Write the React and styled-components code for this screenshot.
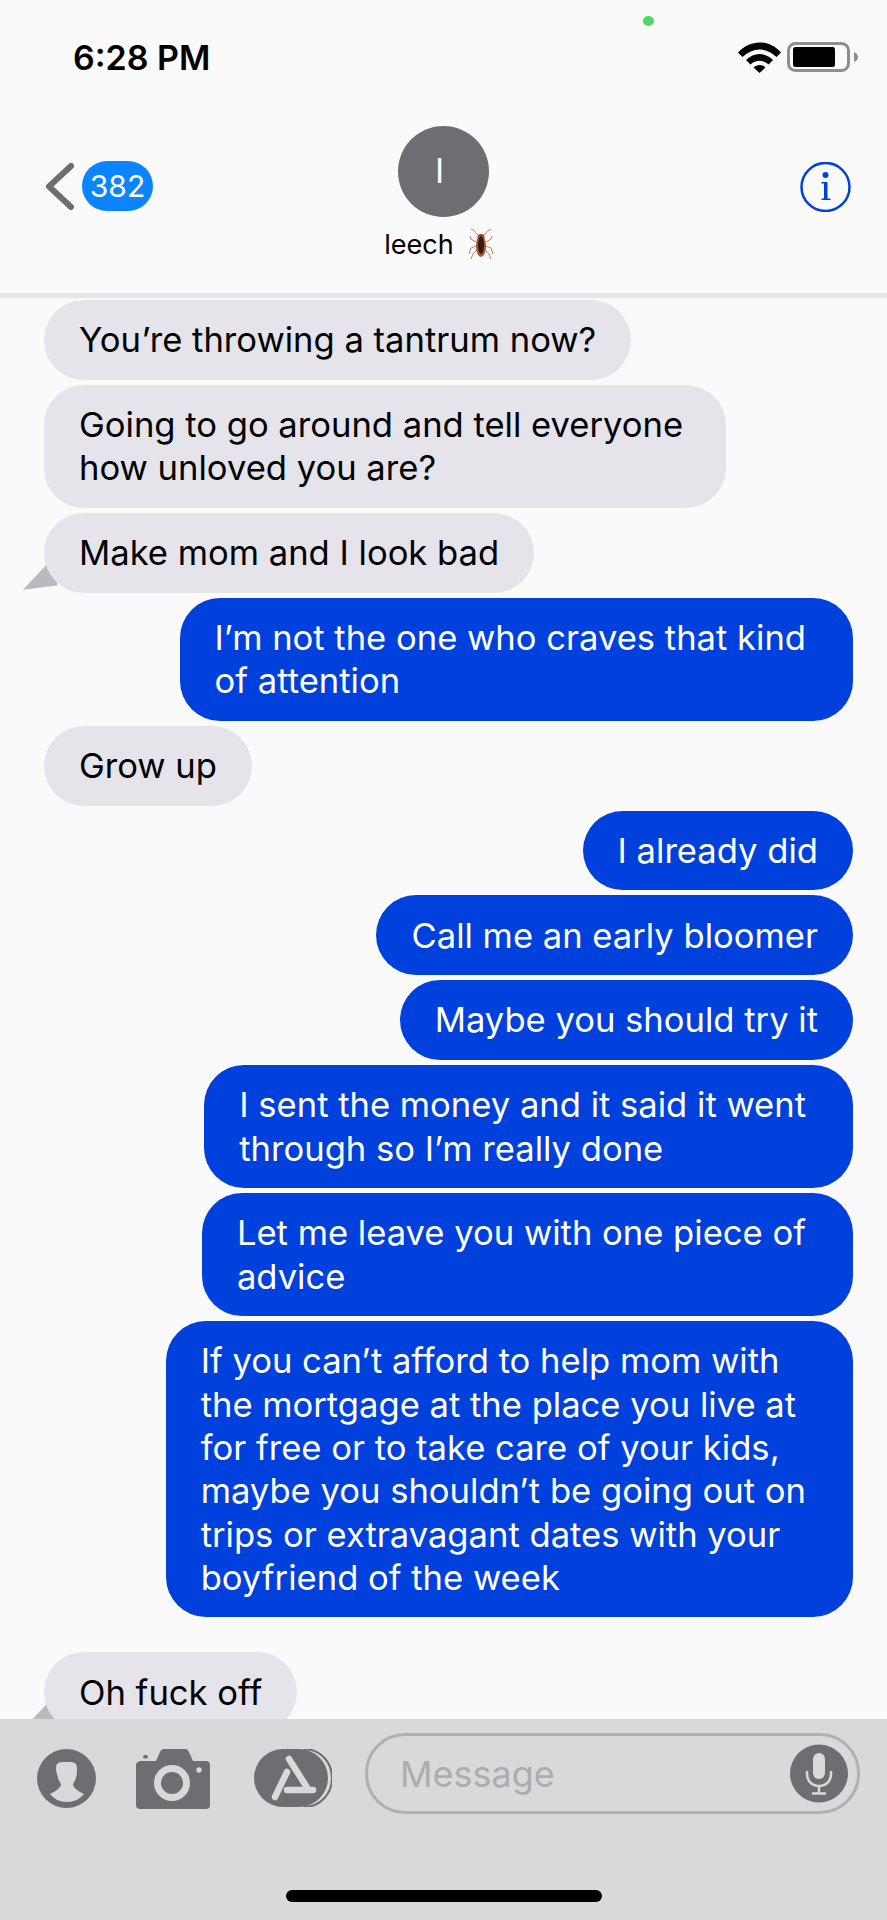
import React from 'react'
import styled, { createGlobalStyle } from 'styled-components'

const Global = createGlobalStyle`
    html, body {
        margin: 0;
        padding: 0;
        background: #fafafa;
    }
`

const Phone = styled.div`
    width: 887px;
    height: 1920px;
    display: flex;
    flex-direction: column;
    overflow: hidden;
    position: relative;
    background: #fafafa;
    font-family: Inter, "Liberation Sans", sans-serif;
`

const Header = styled.header`
    flex: none;
    height: 298px;
    box-sizing: border-box;
    border-bottom: 5px solid #e5e5ea;
    padding-top: 37px;
`

const GreenDot = styled.div`
    position: absolute;
    top: 16px;
    left: 643px;
    width: 11px;
    height: 10px;
    border-radius: 50%;
    background: #4cd964;
`

const StatusBar = styled.div`
    display: flex;
    justify-content: space-between;
    align-items: center;
    height: 40px;
    padding: 0 29px 0 73px;
`

const Clock = styled.span`
    font-size: 34px;
    font-weight: 600;
    color: #000;
`

const StatusIcons = styled.div`
    display: flex;
    align-items: center;
    gap: 6px;
`

const NavBar = styled.div`
    display: grid;
    grid-template-columns: 1fr auto 1fr;
    padding: 49px 36px 0 36px;
`

const BackLink = styled.div`
    display: flex;
    align-items: center;
    gap: 8px;
    height: 50px;
    margin: 35px 0 0 9px;
`

const Badge = styled.span`
    width: 71px;
    height: 50px;
    border-radius: 25px;
    background: #0a84ff;
    color: #fff;
    font-size: 30px;
    line-height: 50px;
    text-align: center;
`

const Contact = styled.div`
    display: flex;
    flex-direction: column;
    align-items: center;
`

const Avatar = styled.div`
    width: 91px;
    height: 91px;
    border-radius: 50%;
    background: #6e6d72;
    color: #fff;
    font-size: 34px;
    line-height: 89px;
    text-align: center;
    text-indent: -8px;
`

const ContactName = styled.div`
    display: flex;
    align-items: center;
    gap: 13px;
    margin: 10px 0 0 -8px;
    height: 34px;
    font-size: 27px;
    color: #000;
`

const InfoWrap = styled.div`
    justify-self: end;
    margin-top: 36px;
`

const Thread = styled.main`
    flex: 1;
    min-height: 0;
    overflow: hidden;
    isolation: isolate;
    display: flex;
    flex-direction: column;
    gap: 5px;
    padding: 2px 34px 0 44px;
`

const Bubble = styled.div`
    position: relative;
    align-self: ${(p) => (p.$mine ? 'flex-end' : 'flex-start')};
    margin-top: ${(p) => (p.$spaced ? '30px' : '0')};
    padding: 18.25px ${(p) => (p.$wrapped ? (p.$mine ? '47px' : '43px') : '35px')} 18.25px 35px;
    border-radius: 40px;
    background: ${(p) => (p.$mine ? '#0040dd' : '#e5e4eb')};
    color: ${(p) => (p.$mine ? '#fff' : '#000')};
    font-size: 34.6px;
    line-height: 43.3px;
    white-space: nowrap;

    ${(p) => p.$tail && `
        &::before {
            content: '';
            position: absolute;
            left: -21px;
            bottom: 3px;
            width: 34px;
            height: 26px;
            background: #b9b9be;
            clip-path: polygon(100% 0, 72% 0, 0 100%, 100% 84%);
            z-index: -1;
        }
    `}
`

const Line = styled.div``

const Composer = styled.footer`
    flex: none;
    height: 201px;
    box-sizing: border-box;
    background: #d9d9d9;
    padding: 14px 27px 0 37px;
    display: flex;
    flex-direction: column;
    position: relative;
`

const ComposerRow = styled.div`
    display: flex;
    align-items: flex-start;
`

const ToolButton = styled.div`
    flex: none;
    margin-top: 16px;
    margin-right: ${(p) => p.$gap}px;
    display: flex;
`

const MessageField = styled.div`
    flex: 1;
    height: 81px;
    box-sizing: border-box;
    border: 3px solid #b0b0b0;
    border-radius: 40px;
    display: flex;
    align-items: center;
    justify-content: space-between;
    padding: 0 9px 0 32px;
`

const Placeholder = styled.span`
    font-size: 36px;
    color: #adadad;
`

const HomeBar = styled.div`
    align-self: center;
    width: 316px;
    height: 12px;
    margin: 76px 0 0 -10px;
    border-radius: 6px;
    background: #000;
`

const Wifi = () => (
    <svg width="43" height="31" viewBox="0 0 43 31">
        <path d="M0 10.5C12-3 31-3 43 10.5l-4.5 4.5C28 5 15 5 4.500 15z" fill="#000" />
        <path d="M8 18c8-8 19-8 27 0l-4.500 4.500c-5.500-5-12.500-5-18 0z" fill="#000" />
        <path d="M15.500 25.500c3.500-3.500 8.500-3.500 12 0L21.500 31z" fill="#000" />
    </svg>
)

const Battery = () => (
    <svg width="71" height="30" viewBox="0 0 71 30">
        <rect x="1.500" y="1.500" width="60" height="27" rx="7" fill="none" stroke="#8e8e8e" strokeWidth="3" />
        <rect x="6" y="5" width="42" height="20" rx="2.500" fill="#000" />
        <path d="M67 10c3 1 4 3 4 5s-1 4-4 5z" fill="#8e8e8e" />
    </svg>
)

const Chevron = () => (
    <svg width="29" height="47" viewBox="0 0 29 47">
        <path d="M26 3L4 23.500 26 44" fill="none" stroke="#6e6d72" strokeWidth="6" strokeLinecap="round" strokeLinejoin="round" />
    </svg>
)

const InfoIcon = () => (
    <svg width="51" height="50" viewBox="0 0 51 50">
        <circle cx="25.500" cy="25" r="24" fill="none" stroke="#0040dd" strokeWidth="2.500" />
        <circle cx="25.500" cy="13" r="3" fill="#0040dd" />
        <path d="M21.500 20h6v16.500h3V38h-9v-1.500h2.500v-15h-2.500z" fill="#0040dd" />
    </svg>
)

const Roach = () => (
    <svg width="28" height="32" viewBox="0 0 28 32">
        <path d="M11 7C9 4 6 2 4 1M17 7c2-3 5-5 7-6M9 14l-5-3-1-3M19 14l5-3 1-3M9 18l-5 2-2 6M19 18l5 2 2 6M10 22l-4 4-2 5M18 22l4 4 2 5" fill="none" stroke="#b5705a" strokeWidth="0.900" />
        <ellipse cx="14" cy="9" rx="3.500" ry="3" fill="#8a4a28" />
        <ellipse cx="14" cy="18" rx="5" ry="11" fill="#a9581f" />
        <ellipse cx="14" cy="17" rx="3" ry="9" fill="#33191a" />
    </svg>
)

const PersonIcon = () => (
    <svg width="59" height="59" viewBox="0 0 59 59">
        <circle cx="29.500" cy="29.500" r="29.500" fill="#6e6d72" />
        <path d="M19 19c0-6 4-6 10.500-6s10.500 0 10.500 6c0 3 0 7-1 9 0 3-2 5-3 7 0 3 4 7 11 10-4 5-10 8-17 8s-13-3-17-8c7-3 11-7 11-10-1-2-3-4-3-7-1-2-2-6-2-9z" fill="#d9d9d9" />
    </svg>
)

const CameraIcon = () => (
    <svg width="74" height="60" viewBox="0 0 74 60">
        <path d="M6 12h14l4-9c1-2 2-3 4-3h21c2 0 3 1 4 3l4 9h13c3 0 4 2 4 4v40c0 3-2 4-4 4H4c-3 0-4-2-4-4V16c0-2 2-4 6-4z" fill="#6e6d72" />
        <rect x="7" y="6" width="5" height="3.500" rx="1.700" fill="#6e6d72" />
        <circle cx="36" cy="34" r="14.500" fill="none" stroke="#d9d9d9" strokeWidth="7" />
        <circle cx="63" cy="21" r="2.700" fill="#d9d9d9" />
    </svg>
)

const AppStoreIcon = () => (
    <svg width="78" height="58" viewBox="0 0 78 58">
        <path d="M50 0c16 0 28 13 28 29S66 58 50 58" fill="none" stroke="#6e6d72" strokeWidth="2" />
        <rect x="0" y="0" width="74" height="58" rx="29" fill="#6e6d72" />
        <path d="M35 10l19 30M33 23L21 48M33 41h26" fill="none" stroke="#d9d9d9" strokeWidth="6.500" strokeLinecap="round" />
    </svg>
)

const MicIcon = () => (
    <svg width="58" height="59" viewBox="0 0 58 59">
        <circle cx="29" cy="29.500" r="29" fill="#6e6d72" />
        <rect x="23" y="9" width="12" height="26" rx="6" fill="#d9d9d9" />
        <path d="M17 27v3c0 7 5 12 12 12s12-5 12-12v-3M29 42v7M22 49.500h14" fill="none" stroke="#d9d9d9" strokeWidth="2.500" />
    </svg>
)

const mensagens = [
    { lines: ["You’re throwing a tantrum now?"] },
    { lines: ["Going to go around and tell everyone", "how unloved you are?"] },
    { lines: ["Make mom and I look bad"], tail: true },
    { mine: true, lines: ["I’m not the one who craves that kind", "of attention"] },
    { lines: ["Grow up"] },
    { mine: true, lines: ["I already did"] },
    { mine: true, lines: ["Call me an early bloomer"] },
    { mine: true, lines: ["Maybe you should try it"] },
    { mine: true, lines: ["I sent the money and it said it went", "through so I’m really done"] },
    { mine: true, lines: ["Let me leave you with one piece of", "advice"] },
    {
        mine: true,
        lines: [
            "If you can’t afford to help mom with",
            "the mortgage at the place you live at",
            "for free or to take care of your kids,",
            "maybe you shouldn’t be going out on",
            "trips or extravagant dates with your",
            "boyfriend of the week",
        ],
    },
    { lines: ["Oh fuck off"], tail: true, spaced: true },
]

export default function App() {
    return (
        <Phone>
            <Global />
            <GreenDot />
            <Header>
                <StatusBar>
                    <Clock>6:28 PM</Clock>
                    <StatusIcons>
                        <Wifi />
                        <Battery />
                    </StatusIcons>
                </StatusBar>
                <NavBar>
                    <BackLink>
                        <Chevron />
                        <Badge>382</Badge>
                    </BackLink>
                    <Contact>
                        <Avatar>I</Avatar>
                        <ContactName>
                            leech
                            <Roach />
                        </ContactName>
                    </Contact>
                    <InfoWrap>
                        <InfoIcon />
                    </InfoWrap>
                </NavBar>
            </Header>
            <Thread>
                {mensagens.map((msg, i) => (
                    <Bubble
                        key={i}
                        $mine={msg.mine}
                        $tail={msg.tail}
                        $spaced={msg.spaced}
                        $wrapped={msg.lines.length > 1}
                    >
                        {msg.lines.map((line) => (
                            <Line key={line}>{line}</Line>
                        ))}
                    </Bubble>
                ))}
            </Thread>
            <Composer>
                <ComposerRow>
                    <ToolButton $gap={40}><PersonIcon /></ToolButton>
                    <ToolButton $gap={44}><CameraIcon /></ToolButton>
                    <ToolButton $gap={33}><AppStoreIcon /></ToolButton>
                    <MessageField>
                        <Placeholder>Message</Placeholder>
                        <MicIcon />
                    </MessageField>
                </ComposerRow>
                <HomeBar />
            </Composer>
        </Phone>
    )
}
